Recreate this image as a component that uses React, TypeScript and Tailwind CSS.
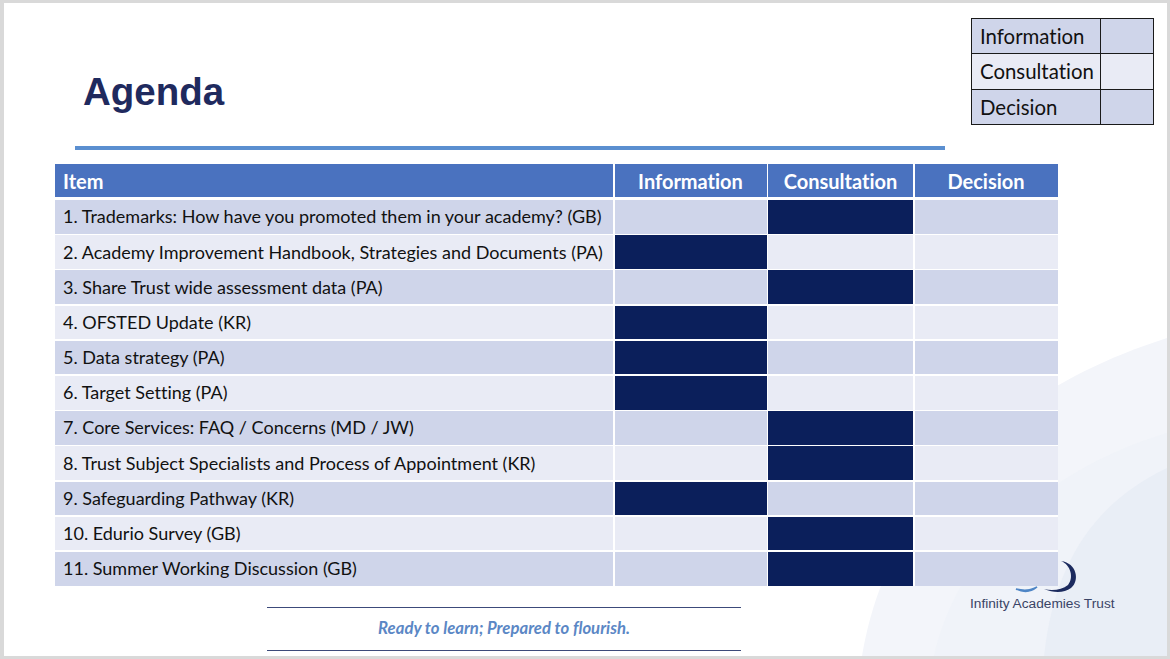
import React from "react";

const rows: { text: string; dark: "i" | "c" }[] = [
  { text: "1. Trademarks: How have you promoted them in your academy? (GB)", dark: "c" },
  { text: "2. Academy Improvement Handbook, Strategies and Documents (PA)", dark: "i" },
  { text: "3. Share Trust wide assessment data (PA)", dark: "c" },
  { text: "4. OFSTED Update (KR)", dark: "i" },
  { text: "5. Data strategy (PA)", dark: "i" },
  { text: "6. Target Setting (PA)", dark: "i" },
  { text: "7. Core Services: FAQ / Concerns (MD / JW)", dark: "c" },
  { text: "8. Trust Subject Specialists and Process of Appointment (KR)", dark: "c" },
  { text: "9. Safeguarding Pathway (KR)", dark: "i" },
  { text: "10. Edurio Survey (GB)", dark: "c" },
  { text: "11. Summer Working Discussion (GB)", dark: "c" },
];

const DARK = "bg-[#0b1f5b]";

export default function App() {
  return (
    <div className="w-[1170px] h-[659px] bg-[#d9d9d9] pt-[3px] pl-[4px] overflow-hidden">
      <div className="relative w-[1163px] h-[653px] bg-white overflow-hidden flex flex-col [font-variant-ligatures:none]">
        {/* background decoration */}
        <svg className="absolute inset-0 pointer-events-none" width="1163" height="653" viewBox="0 0 1163 653">
          <path d="M 858 653 C 880 520, 975 395, 1163 335 L 1163 653 Z" fill="#f3f5fa" />
          <path d="M 930 653 C 950 560, 1030 470, 1163 430 L 1163 653 Z" fill="#eef2f8" opacity="0.7" />
          <path d="M 1040 653 C 1050 560, 1090 500, 1163 465 L 1163 653 Z" fill="#e9eef6" />
          {/* infinity logo */}
          <path d="M 1057 558 C 1073 560, 1076 578, 1067 585 C 1060 590, 1050 590, 1040 586 C 1048 588, 1058 587, 1064 582 C 1070 575, 1067 562, 1057 558 Z" fill="#1b2a5e" />
          <path d="M 1012 586 C 1020 590, 1027 589, 1033 584 C 1028 587, 1020 588, 1012 586 Z" fill="#4f86c6" stroke="#4f86c6" strokeWidth="1.5" />
        </svg>

        {/* header area */}
        <div className="relative flex h-[141px] shrink-0">
          <div className="pl-[79px] pt-[67px]">
            <h1 className="text-[38.5px] leading-[44px] font-bold text-[#1f2a5e]" style={{ fontFamily: '"Liberation Sans", Arial, sans-serif' }}>
              Agenda
            </h1>
          </div>
          <div
            className="ml-auto mr-[13px] mt-[15px] w-[183px] h-[107px] border-[1.5px] border-[#1a1a1a] flex flex-col text-[#111]"
            style={{ fontFamily: 'Lato, "Open Sans", sans-serif' }}
          >
            {[
              { t: "Information", bg: "bg-[#cfd5ea]" },
              { t: "Consultation", bg: "bg-[#e9ebf5]" },
              { t: "Decision", bg: "bg-[#cfd5ea]" },
            ].map((r, i) => (
              <div key={r.t} className={`flex flex-1 ${r.bg} ${i > 0 ? "border-t-[1.5px] border-[#1a1a1a]" : ""}`}>
                <div className="w-[129px] border-r-[1.5px] border-[#1a1a1a] pl-[8px] flex items-center text-[20.4px] leading-none">
                  {r.t}
                </div>
                <div className="flex-1" />
              </div>
            ))}
          </div>
        </div>

        {/* blue rule */}
        <div className="relative ml-[71px] w-[870px] h-[4px] bg-[#5b8fd0] mt-[2px] shrink-0" />

        {/* table */}
        <div
          className="relative mt-[14px] ml-[51px] w-[1003px] bg-white grid grid-cols-[558px_152px_145px_143px] gap-x-[1.5px] shrink-0"
          style={{ fontFamily: 'Lato, "Open Sans", sans-serif' }}
        >
          <div className="h-[33px] bg-[#4a72bf] text-white font-bold text-[20px] flex items-center pl-[8px]">Item</div>
          <div className="h-[33px] bg-[#4a72bf] text-white font-bold text-[20px] flex items-center justify-center">Information</div>
          <div className="h-[33px] bg-[#4a72bf] text-white font-bold text-[20px] flex items-center justify-center">Consultation</div>
          <div className="h-[33px] bg-[#4a72bf] text-white font-bold text-[20px] flex items-center justify-center">Decision</div>
          {rows.map((r, i) => {
            const bg = i % 2 === 0 ? "bg-[#cfd5ea]" : "bg-[#e9ebf5]";
            const top = i === 0 ? "mt-[3px]" : "mt-[1.5px]";
            return (
              <React.Fragment key={i}>
                <div className={`h-[33.7px] ${top} ${bg} text-[#111] text-[18px] flex items-center pl-[8px] whitespace-nowrap`}>
                  {r.text}
                </div>
                <div className={`h-[33.7px] ${top} ${r.dark === "i" ? DARK : bg}`} />
                <div className={`h-[33.7px] ${top} ${r.dark === "c" ? DARK : bg}`} />
                <div className={`h-[33.7px] ${top} ${bg}`} />
              </React.Fragment>
            );
          })}
        </div>

        {/* footer */}
        <div className="relative flex shrink-0">
          <div className="ml-[263px] mt-[21px] w-[474px] border-t border-b border-[#3c4a7a] h-[44px] flex items-center justify-center">
            <span
              className="italic font-bold text-[16.7px] text-[#5b87c5]"
              style={{ fontFamily: 'Lato, "Open Sans", sans-serif' }}
            >
              Ready to learn; Prepared to flourish.
            </span>
          </div>
          <div
            className="ml-[229px] pt-[10px] text-[13.7px] leading-[16px] text-[#3a4466]"
            style={{ fontFamily: '"Liberation Sans", Arial, sans-serif' }}
          >
            Infinity Academies Trust
          </div>
        </div>
      </div>
    </div>
  );
}
